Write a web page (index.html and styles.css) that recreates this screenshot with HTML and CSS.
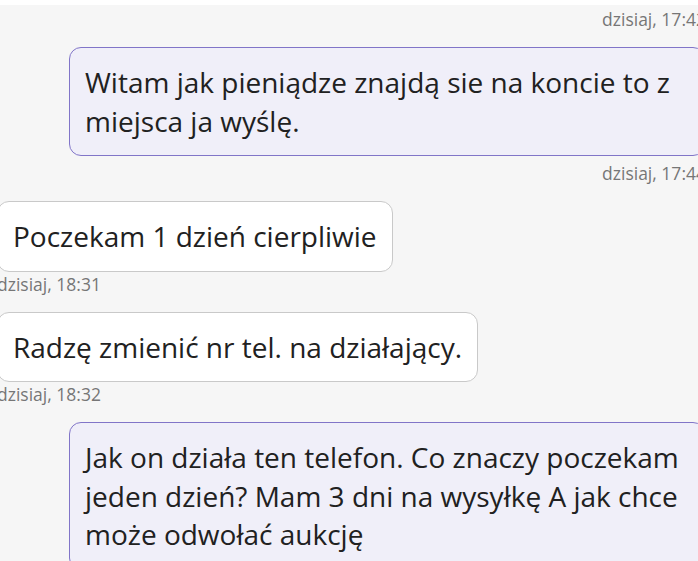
FILE: index.html
```
<!DOCTYPE html>
<html>
<head>
    <meta charset="utf-8">
    <title>Wiadomości</title>
    <link rel="stylesheet" href="styles.css">
</head>
<body>
<div id="main">
    <ol id="chat">
        <li class="msg sent first">
            <span class="time">dzisiaj, 17:42</span>
        </li>
        <li class="msg sent">
            <div class="bubble">Witam jak pieniądze znajdą sie na koncie to z miejsca ja wyślę.</div>
            <span class="time">dzisiaj, 17:44</span>
        </li>
        <li class="msg received">
            <div class="bubble">Poczekam 1 dzień cierpliwie</div>
            <span class="time">dzisiaj, 18:31</span>
        </li>
        <li class="msg received">
            <div class="bubble">Radzę zmienić nr tel. na działający.</div>
            <span class="time">dzisiaj, 18:32</span>
        </li>
        <li class="msg sent">
            <div class="bubble">Jak on działa ten telefon. Co znaczy poczekam jeden dzień? Mam 3 dni na wysyłkę A jak chce może odwołać aukcję</div>
            <span class="time">dzisiaj, 18:40</span>
        </li>
    </ol>
</div>
</body>
</html>
```

FILE: styles.css
```
* {
    margin: 0;
    padding: 0;
    box-sizing: border-box;
}

ol, ul {
    list-style: none;
}

html, body {
    height: 100%;
    overflow: hidden;
}

body {
    background: #fff;
    font-family: "Open Sans", "Noto Sans", sans-serif;
    color: #212121;
}

div#main {
    margin-top: 5px;
    height: 100%;
    background: #f6f6f6;
    overflow: hidden;
}

ol#chat {
    width: 708px;
    margin-left: -3px;
    padding-top: 2px;
    display: flex;
    flex-direction: column;
}

li.msg {
    display: flex;
    flex-direction: column;
    margin-bottom: 16px;
}

li.sent {
    align-items: flex-end;
}

li.received {
    align-items: flex-start;
}

div.bubble {
    font-size: 28px;
    line-height: 38.5px;
    padding: 15px 15px;
    border-radius: 12px;
    border: 1px solid #c9c9c9;
    background: #fff;
}

li.sent div.bubble {
    width: 636px;
    background: #f0eff9;
    border-color: #8175c8;
}

li.received div.bubble {
    max-width: 560px;
}

span.time {
    font-size: 17.5px;
    line-height: 24px;
    color: #767676;
}

li.sent span.time {
    margin-top: 5px;
    margin-right: -1px;
}

li.sent.first span.time {
    margin-top: 0;
}
```
